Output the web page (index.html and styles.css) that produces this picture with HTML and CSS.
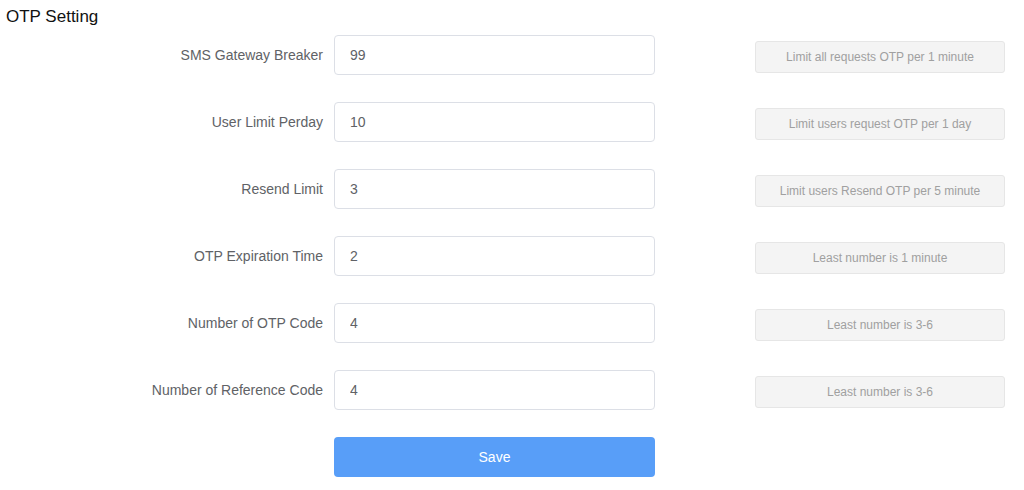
FILE: index.html
```html
<!DOCTYPE html>
<html>
<head>
<meta charset="utf-8">
<link rel="stylesheet" href="styles.css">
</head>
<body>
<div class="page">
  <h1 class="title">OTP Setting</h1>
  <form class="form">
    <div class="row">
      <label class="label">SMS Gateway Breaker</label>
      <input class="input" type="text" value="99">
      <div class="hint">Limit all requests OTP per 1 minute</div>
    </div>
    <div class="row">
      <label class="label">User Limit Perday</label>
      <input class="input" type="text" value="10">
      <div class="hint">Limit users request OTP per 1 day</div>
    </div>
    <div class="row">
      <label class="label">Resend Limit</label>
      <input class="input" type="text" value="3">
      <div class="hint">Limit users Resend OTP per 5 minute</div>
    </div>
    <div class="row">
      <label class="label">OTP Expiration Time</label>
      <input class="input" type="text" value="2">
      <div class="hint">Least number is 1 minute</div>
    </div>
    <div class="row">
      <label class="label">Number of OTP Code</label>
      <input class="input" type="text" value="4">
      <div class="hint">Least number is 3-6</div>
    </div>
    <div class="row">
      <label class="label">Number of Reference Code</label>
      <input class="input" type="text" value="4">
      <div class="hint">Least number is 3-6</div>
    </div>
    <div class="row">
      <span class="label"></span>
      <button class="save" type="button">Save</button>
    </div>
  </form>
</div>
</body>
</html>
```

FILE: styles.css
```css
* { box-sizing: border-box; }
html, body { margin: 0; padding: 0; background: #fff; }
body { font-family: "Liberation Sans", Arial, sans-serif; }
.page { padding: 6px 0 0 6px; }
.title {
  margin: 0;
  font-size: 17px;
  font-weight: normal;
  line-height: 22px;
  color: #111;
}
.form { margin-top: 7px; }
.row {
  display: flex;
  align-items: flex-start;
  margin-bottom: 27px;
}
.label {
  width: 328px;
  padding-right: 11px;
  text-align: right;
  font-size: 14px;
  line-height: 40px;
  color: #606266;
}
.input {
  width: 321px;
  height: 40px;
  padding: 0 15px;
  border: 1px solid #dcdfe6;
  border-radius: 4px;
  font-family: inherit;
  font-size: 14px;
  color: #606266;
  outline: none;
}
.hint {
  margin-left: 100px;
  margin-top: 6px;
  width: 250px;
  height: 32px;
  line-height: 30px;
  border: 1px solid #e6e6e6;
  border-radius: 3px;
  background: #f4f4f4;
  color: #a0a0a0;
  font-size: 12px;
  text-align: center;
}
.save {
  width: 321px;
  height: 40px;
  border: none;
  border-radius: 4px;
  background: #589ef8;
  color: #fff;
  font-family: inherit;
  font-size: 14px;
}
```
